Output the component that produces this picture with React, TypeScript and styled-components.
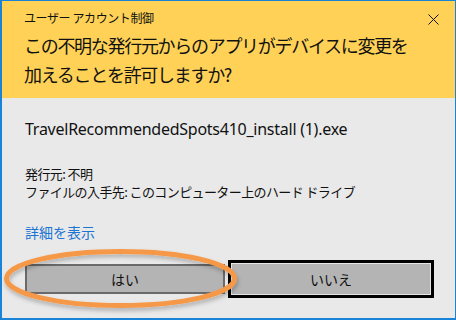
import styled, { createGlobalStyle } from 'styled-components';

const GlobalStyle = createGlobalStyle`
  html, body {
    margin: 0;
    padding: 0;
    background: #ffffff;
  }
  * {
    box-sizing: border-box;
  }
`;

const jp = `"Noto Sans CJK JP", "Noto Sans", sans-serif`;

const Window = styled.div`
  width: 456px;
  height: 320px;
  display: flex;
  flex-direction: column;
  border: 1px solid #1883d7;
  border-left-width: 2px;
  border-bottom-width: 2px;
  font-family: ${jp};
  color: #111;
  overflow: hidden;
`;

const Header = styled.header`
  height: 97px;
  flex: none;
  background: #ffd257;
  padding: 9px 0 0 22px;
  display: flex;
  flex-direction: column;
`;

const TitleBar = styled.div`
  display: flex;
  align-items: center;
  justify-content: space-between;
  padding-right: 16px;
  height: 16px;
`;

const Title = styled.span`
  font-size: 12px;
  line-height: 16px;
  letter-spacing: -0.4px;
`;

const CloseIcon = styled.svg`
  width: 11px;
  height: 11px;
  margin-top: 2px;
`;

const Question = styled.h1`
  margin: 5px 0 0;
  font-size: 18px;
  font-weight: 400;
  line-height: 29px;
  letter-spacing: -1.3px;
`;

const Body = styled.main`
  flex: 1;
  background: #e9e9e9;
  padding: 20px 0 0 23px;
  display: flex;
  flex-direction: column;
`;

const FileName = styled.div`
  font-family: "Noto Sans", "Noto Sans CJK JP", sans-serif;
  font-size: 16px;
  line-height: 22px;
  letter-spacing: -0.25px;
`;

const Details = styled.div`
  margin-top: 25px;
  font-size: 13px;
  line-height: 18px;
  letter-spacing: -0.6px;
`;

const MoreLink = styled.a`
  margin-top: 22px;
  font-size: 14px;
  line-height: 18px;
  color: #1a74d2;
  text-decoration: none;
  align-self: flex-start;
`;

const ButtonRow = styled.div`
  position: relative;
  margin-top: 19px;
  display: flex;
  align-items: center;
  gap: 3px;
  width: 410px;
`;

const DialogButton = styled.button<{ $focused?: boolean }>`
  font-family: ${jp};
  font-size: 14px;
  color: #111;
  background: #b4b4b4;
  width: ${(p) => (p.$focused ? 206 : 200)}px;
  height: ${(p) => (p.$focused ? 38 : 30)}px;
  border: ${(p) => (p.$focused ? '3px solid #000' : '2px solid #6a6a6a')};
  box-shadow: ${(p) => (p.$focused ? 'inset 0 0 0 1px #e6e6e6' : 'none')};
  padding: 0;
  margin: 0;
`;

const Highlight = styled.svg`
  position: absolute;
  left: -22px;
  top: -11px;
  width: 240px;
  height: 66px;
  pointer-events: none;
  overflow: visible;
`;

export default function App() {
  return (
    <>
      <GlobalStyle />
      <Window>
        <Header>
          <TitleBar>
            <Title>ユーザー アカウント制御</Title>
            <CloseIcon viewBox="0 0 11 11">
              <path d="M0.5 0.5 L10.5 10.5 M10.5 0.5 L0.5 10.5" stroke="#111" strokeWidth="1" fill="none" />
            </CloseIcon>
          </TitleBar>
          <Question>
            この不明な発行元からのアプリがデバイスに変更を
            <br />
            加えることを許可しますか?
          </Question>
        </Header>
        <Body>
          <FileName>TravelRecommendedSpots410_install (1).exe</FileName>
          <Details>
            発行元: 不明
            <br />
            ファイルの入手先: このコンピューター上のハード ドライブ
          </Details>
          <MoreLink href="#">詳細を表示</MoreLink>
          <ButtonRow>
            <DialogButton>はい</DialogButton>
            <DialogButton $focused>いいえ</DialogButton>
            <Highlight viewBox="0 0 240 66">
              <defs>
                <filter id="soft" x="-10%" y="-20%" width="120%" height="150%">
                  <feDropShadow dx="1" dy="3" stdDeviation="2" floodColor="#000" floodOpacity="0.25" />
                </filter>
              </defs>
              <ellipse
                cx="117.5"
                cy="29.5"
                rx="114"
                ry="27"
                fill="none"
                stroke="#f5994a"
                strokeWidth="5"
                filter="url(#soft)"
              />
            </Highlight>
          </ButtonRow>
        </Body>
      </Window>
    </>
  );
}
